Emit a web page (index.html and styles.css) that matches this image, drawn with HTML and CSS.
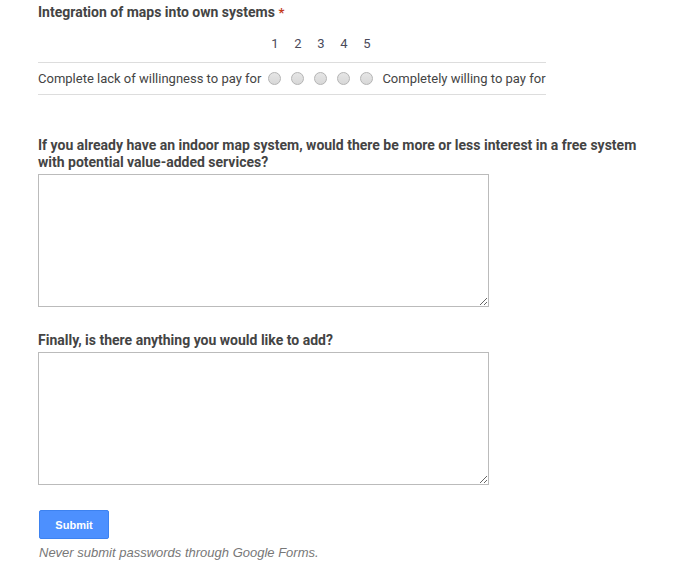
FILE: index.html
```html
<!DOCTYPE html>
<html>
<head>
<meta charset="utf-8">
<link rel="stylesheet" href="styles.css">
</head>
<body>
<div class="form">
  <div class="item item-scale">
    <div class="q-title">Integration of maps into own systems <span class="req">*</span></div>
    <div class="scale">
      <div class="cell"></div>
      <div class="cell num">1</div>
      <div class="cell num">2</div>
      <div class="cell num">3</div>
      <div class="cell num">4</div>
      <div class="cell num">5</div>
      <div class="cell"></div>
      <div class="cell row lbl-left">Complete lack of willingness to pay for</div>
      <div class="cell row"><span class="radio"></span></div>
      <div class="cell row"><span class="radio"></span></div>
      <div class="cell row"><span class="radio"></span></div>
      <div class="cell row"><span class="radio"></span></div>
      <div class="cell row"><span class="radio"></span></div>
      <div class="cell row lbl-right">Completely willing to pay for</div>
    </div>
  </div>
  <div class="item item-text">
    <div class="q-title">If you already have an indoor map system, would there be more or less interest in a free system with potential value-added services?</div>
    <textarea class="ta"></textarea>
  </div>
  <div class="item item-text2">
    <div class="q-title">Finally, is there anything you would like to add?</div>
    <textarea class="ta"></textarea>
  </div>
  <div class="submit-wrap">
    <button class="submit">Submit</button>
    <div class="note">Never submit passwords through Google Forms.</div>
  </div>
</div>
</body>
</html>
```
FILE: styles.css
```css
html, body {
  margin: 0;
  padding: 0;
  background: #fff;
}
body {
  font-family: Roboto, "Liberation Sans", Arial, sans-serif;
  color: #444;
}
.form {
  padding: 4px 0 0 38px;
}
.q-title {
  font-size: 14px;
  font-weight: bold;
  line-height: 17px;
  color: #444;
  width: 610px;
}
.req {
  color: #c43b1d;
  font-size: 13px;
}
.scale {
  display: grid;
  grid-template-columns: auto repeat(5, 23px) auto;
  width: max-content;
  margin-top: 12px;
  font-size: 13px;
}
.cell {
  display: flex;
  align-items: center;
  justify-content: center;
}
.num {
  height: 20px;
  padding-bottom: 9px;
  color: #4a4a5a;
  font-size: 13px;
}
.row {
  height: 31px;
  border-top: 1px solid #ddd;
  border-bottom: 1px solid #ddd;
  color: #444;
}
.lbl-left {
  justify-content: flex-start;
  padding-right: 2px;
}
.lbl-right {
  justify-content: flex-start;
  padding-left: 4px;
}
.radio {
  display: block;
  width: 11px;
  height: 11px;
  border-radius: 50%;
  border: 1px solid #b4b4b4;
  background: linear-gradient(#e6e6e6, #d8d8d8);
}
.item-text {
  margin-top: 42px;
}
.item-text2 {
  margin-top: 25px;
}
.ta {
  display: block;
  box-sizing: border-box;
  width: 451px;
  height: 133px;
  margin: 3px 0 0 0;
  border: 1px solid #bbb;
  padding: 2px;
  font-family: inherit;
  resize: both;
}
.submit-wrap {
  margin-top: 25px;
}
.submit {
  display: block;
  margin-left: 1px;
  width: 70px;
  height: 29px;
  background: #4d90fe;
  border: 1px solid #3d82f0;
  border-radius: 2px;
  color: #fff;
  font-family: Arial, "Liberation Sans", sans-serif;
  font-weight: bold;
  font-size: 11px;
  padding: 0;
}
.note {
  margin: 6px 0 0 1px;
  font-family: Arial, "Liberation Sans", sans-serif;
  font-style: italic;
  font-size: 13px;
  color: #777;
}
```
